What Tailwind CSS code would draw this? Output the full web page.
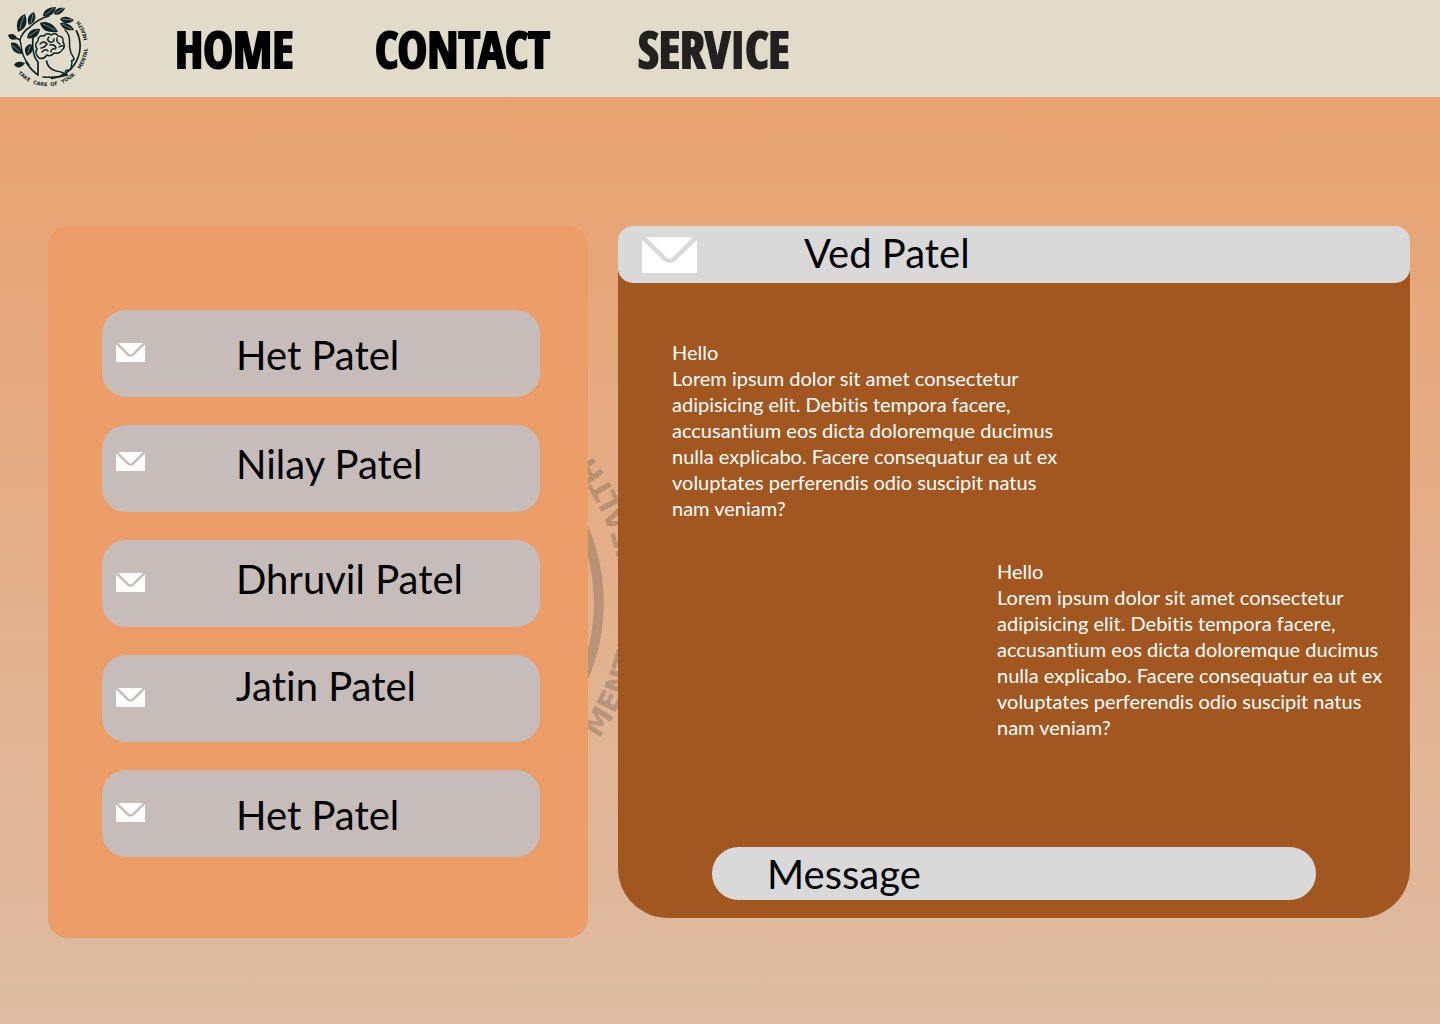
<!DOCTYPE html>
<html lang="en">
<head>
<meta charset="utf-8">
<meta name="viewport" content="width=device-width, initial-scale=1">
<title>Messages</title>
<script src="https://cdn.jsdelivr.net/npm/@tailwindcss/browser@4"></script>
</head>
<body class="min-h-screen flex flex-col bg-linear-to-b from-[#ea9f6a] to-[#ddbca3] font-['Lato',sans-serif] text-black [font-variant-ligatures:none]">
<svg class="hidden" aria-hidden="true">
  <symbol id="envelope" viewBox="0 0 55 36">
    <path d="M4 0H51L31 20Q27.500 23.500 24 20Z" fill="#fff"/>
    <path d="M0 3L21.500 23.500Q27.500 28 33.500 23.500L55 3V36H0Z" fill="#fff"/>
  </symbol>
  <symbol id="logo" viewBox="0 0 100 100" overflow="visible">
    <path id="arc" d="M7.300 47A40.200 40.200 0 0 0 87.700 47A40.200 40.200 0 0 0 47.500 6.800" fill="none"/>
    <g fill="none" stroke="currentColor" stroke-linecap="round">
      <path d="M76.300 31.700A32.600 32.600 0 0 1 51.500 79.400" stroke-width="1.700"/>
      <path d="M65 31Q69.500 35 69.500 42Q69 48 71 54L74 59.500Q74.500 61 71.500 62Q72.500 64 71.500 66Q72 70 69 71Q65 71 65.500 73L67 76" stroke-width="1.500"/>
      <path d="M46.500 62Q48 70 56 72Q63 73 67 76Q58 79 43 78" stroke-width="1.600"/>
      <path d="M38 76V63Q34 59 33 50Q32 41 34 34M38 76Q31 71 26 63" stroke-width="1.700"/>
      <path d="M29 66Q22 58 21 46L20 41Q22 33 30 28Q38 20 49 17M20 41L14 38M22 53L18 50" stroke-width="1.500"/>
      <path d="M39 59Q34 54 37 50Q34 45 38 42Q38 36 44 37Q47 33 51 36Q56 33 58 37Q64 37 63 43Q66 48 62 51Q60 55 54 54Q51 58 47 56Q43 61 39 59M40 45Q44 41 47 45Q44 49 41 49M49 38Q46 41 50 43Q54 44 54 40M57 39Q56 43 60 45M50 46Q55 45 56 49M59 48Q62 46 63 47M42 53Q46 49 48 52M51 53Q51 49 55 50" stroke-width="1.500"/>
    </g>
    <g fill="currentColor">
      <path d="M18 33C15 24 18 18 25 15C28 23 27 29 18 33Z"/>
      <path d="M29 26C26 20 29 15 34 13C37 19 35 24 29 26Z"/>
      <path d="M43 17C43 11 49 8 56 8C55 15 49 19 43 17Z"/>
      <path d="M54 15C55 9 60 8 65 9C63 14 58 17 54 15Z"/>
      <path d="M60 20C64 16 69 18 74 21C69 26 63 25 60 20Z"/>
      <path d="M40 24C46 21 54 24 58 33C49 34 42 32 40 24Z"/>
      <path d="M60 24C66 23 72 26 74 31C67 32 62 30 60 24Z"/>
      <path d="M27 39C28 32 33 29 40 30C39 37 34 41 27 39Z"/>
      <path d="M8 36C12 34 16 35 17 40C12 42 9 40 8 36Z"/>
      <path d="M11 44C16 42 21 47 22 55C15 55 11 51 11 44Z"/>
      <path d="M27 57C23 51 25 46 31 45C34 50 33 54 27 57Z"/>
      <path d="M14 66C16 62 20 62 25 64C22 69 17 70 14 66Z"/>
    </g>
    <path d="M20 30Q21 23 24 17M31 24L33 15M45 16L54 9M56 14L64 9M62 20L72 21M43 25L55 31M62 25L72 30M29 37L38 31M12 46L20 53M28 54L30 47" fill="none" stroke="#e1dbca" stroke-width=".5"/>
    <g font-family="DejaVu Sans, sans-serif" font-weight="700" font-size="5" fill="currentColor">
      <text><textPath href="#arc" startOffset="30">TAKE</textPath></text>
      <text><textPath href="#arc" startOffset="48">CARE</textPath></text>
      <text><textPath href="#arc" startOffset="66">OF</textPath></text>
      <text><textPath href="#arc" startOffset="78">YOUR</textPath></text>
      <text><textPath href="#arc" startOffset="101">MENTAL</textPath></text>
      <text><textPath href="#arc" startOffset="132">HEALTH</textPath></text>
    </g>
  </symbol>
</svg>

<header class="flex h-[97px] items-center bg-[#e1dbca]">
  <a href="#" aria-label="Home page" class="size-[100px] shrink-0 text-[#0f2426]"><svg class="size-[100px]"><use href="#logo"/></svg></a>
  <nav class="ml-[75px] flex gap-20 font-['Open_Sans_Condensed','Roboto_Condensed','Roboto',sans-serif] text-[50px] leading-none font-black whitespace-nowrap [-webkit-text-stroke:2px_currentColor]">
    <a href="#" class="w-[120px]">HOME</a>
    <a href="#" class="w-[183px]">CONTACT</a>
    <a href="#" class="text-[#22211f]">SERVICE</a>
  </nav>
</header>

<main class="relative isolate grid grow grid-cols-[540fr_792fr] items-start gap-[30px] pt-[129px] pr-[30px] pb-20 pl-12">
  <svg class="absolute top-[233px] left-[134px] -z-10 size-[580px] text-[#0f2426] opacity-20" aria-hidden="true"><use href="#logo"/></svg>

  <section aria-label="Conversations" class="rounded-[20px] bg-[#ed9e68] pt-[84px] pr-12 pb-[81px] pl-[54px]">
    <ul class="flex flex-col gap-7 text-[40px] leading-[52px]">
      <li><button class="flex h-[87px] w-full items-center gap-[91px] rounded-3xl bg-[#c6bcba] pb-[2px] pl-[14px] text-left"><svg class="h-[19px] w-[29px]"><use href="#envelope"/></svg><span class="pt-1">Het Patel</span></button></li>
      <li><button class="flex h-[87px] w-full items-center gap-[91px] rounded-3xl bg-[#c6bcba] pb-[14px] pl-[14px] text-left"><svg class="h-[19px] w-[29px]"><use href="#envelope"/></svg><span class="pt-1">Nilay Patel</span></button></li>
      <li><button class="flex h-[87px] w-full items-center gap-[91px] rounded-3xl bg-[#c6bcba] pb-[2px] pl-[14px] text-left"><svg class="h-[19px] w-[29px]"><use href="#envelope"/></svg><span class="pb-2">Dhruvil Patel</span></button></li>
      <li><button class="flex h-[87px] w-full items-center gap-[91px] rounded-3xl bg-[#c6bcba] pb-[2px] pl-[14px] text-left"><svg class="h-[19px] w-[29px]"><use href="#envelope"/></svg><span class="pb-6">Jatin Patel</span></button></li>
      <li><button class="flex h-[87px] w-full items-center gap-[91px] rounded-3xl bg-[#c6bcba] pb-[2px] pl-[14px] text-left"><svg class="h-[19px] w-[29px]"><use href="#envelope"/></svg><span class="pt-1">Het Patel</span></button></li>
    </ul>
  </section>

  <section aria-label="Chat" class="flex flex-col rounded-[50px] bg-[#a25720] pb-[18px]">
    <div class="flex h-[57px] items-center gap-[107px] rounded-[15px] bg-[#d9d9d9] pl-6">
      <svg class="h-9 w-[55px]"><use href="#envelope"/></svg>
      <h1 class="pb-1 text-[40px] leading-[52px]">Ved Patel</h1>
    </div>
    <div class="flex flex-col gap-[37px] pt-14 pr-[26px] pl-[54px] text-xl leading-[26px] text-white">
      <p class="w-[387px] whitespace-nowrap">Hello<br>Lorem ipsum dolor sit amet consectetur<br>adipisicing elit. Debitis tempora facere,<br>accusantium eos dicta doloremque ducimus<br>nulla explicabo. Facere consequatur ea ut ex<br>voluptates perferendis odio suscipit natus<br>nam veniam?</p>
      <p class="w-[387px] self-end whitespace-nowrap">Hello<br>Lorem ipsum dolor sit amet consectetur<br>adipisicing elit. Debitis tempora facere,<br>accusantium eos dicta doloremque ducimus<br>nulla explicabo. Facere consequatur ea ut ex<br>voluptates perferendis odio suscipit natus<br>nam veniam?</p>
    </div>
    <input type="text" aria-label="Message" placeholder="Message" class="mx-[94px] mt-[107px] h-[53px] rounded-full bg-[#d9d9d9] pl-[55px] text-[40px] placeholder:text-black">
  </section>
</main>
</body>
</html>
